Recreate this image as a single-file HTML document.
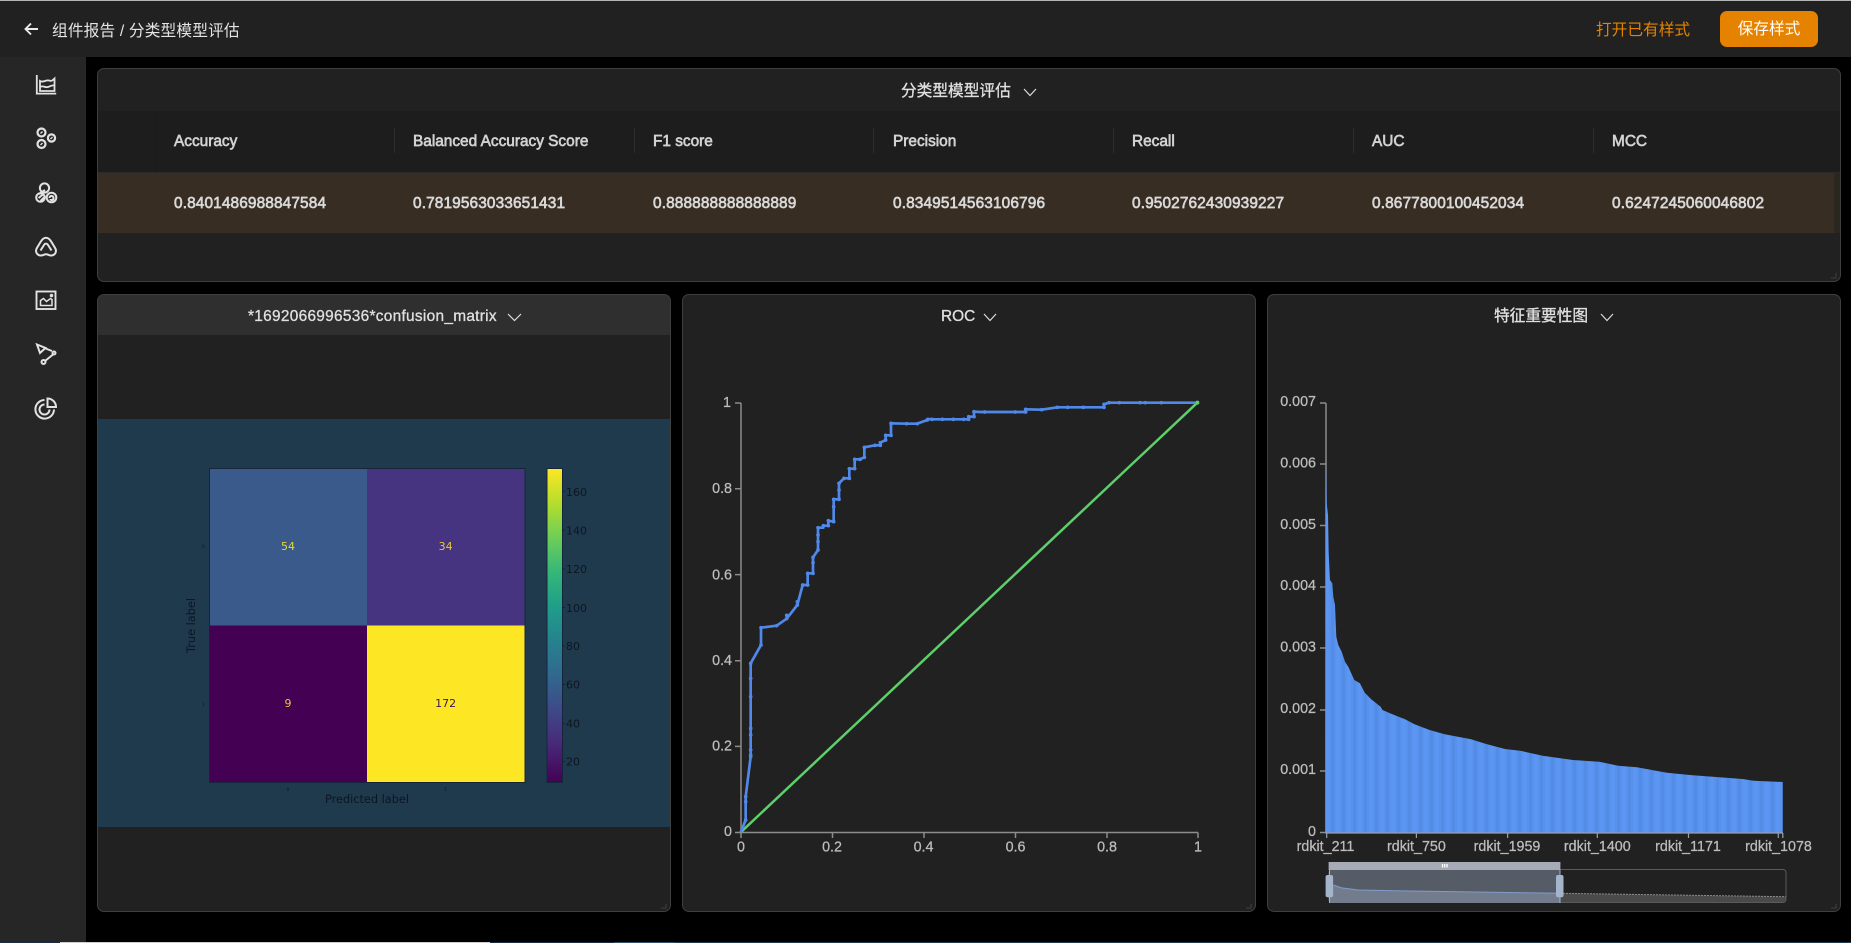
<!DOCTYPE html>
<html lang="zh">
<head>
<meta charset="utf-8">
<title>分类型模型评估</title>
<style>
html,body{margin:0;padding:0;background:#000;}
body{width:1851px;height:943px;overflow:hidden;position:relative;font-family:"Liberation Sans","Noto Sans CJK SC",sans-serif;color:#d9d9d9;font-size:15.4px;}
.abs{position:absolute;}
.cjk{font-size:15.7px;}
#top{left:0;top:0;width:1851px;height:57px;background:#212121;}
#topline{left:0;top:0;width:1851px;height:1px;background:#b4b4b4;}
#crumb{left:52px;top:21px;line-height:22px;color:#e4e4e4;white-space:nowrap;letter-spacing:.15px;}
#open{left:1596px;top:20px;line-height:22px;color:#e58200;white-space:nowrap;}
#save{left:1720px;top:11px;width:98px;height:36px;background:#e58200;border-radius:7px;color:#fff;text-align:center;line-height:38px;}
#side{left:0;top:57px;width:86px;height:886px;background:#262626;}
.panel{position:absolute;background:#212121;border:1px solid #3f3f3f;border-radius:7px;box-sizing:border-box;}
.ptitle{position:absolute;line-height:22px;white-space:nowrap;color:#e0e0e0;-webkit-text-stroke:.3px #e0e0e0;}
.th,.td{position:absolute;white-space:nowrap;line-height:20px;}
.th{top:132px;color:#d2d2d2;-webkit-text-stroke:.65px #d2d2d2;}
.td{top:194px;color:#d9d9d9;-webkit-text-stroke:.65px #d9d9d9;letter-spacing:.13px;}
.div{position:absolute;top:128px;width:1px;height:25px;background:#2d2d2d;}
#bottom{left:0;top:942px;width:1851px;height:1px;background:#1f3a4c;}
svg{position:absolute;left:0;top:0;}
.lab text{stroke:#bdbdbd;stroke-width:.25px;}
</style>
</head>
<body>
<div class="abs" id="top"></div>
<div class="abs" id="topline"></div>
<div class="abs cjk" id="crumb">组件报告 / 分类型模型评估</div>
<div class="abs cjk" id="open">打开已有样式</div>
<div class="abs cjk" id="save">保存样式</div>
<div class="abs" id="side"></div>

<div class="panel" style="left:97px;top:68px;width:1744px;height:214px;"></div>
<div class="abs" style="left:98px;top:111px;width:1742px;height:61px;background:#1d1d1d;"></div>
<div class="abs" style="left:155px;top:111px;width:1px;height:61px;background:#1a1a1a;"></div>
<div class="abs" style="left:98px;top:172px;width:1742px;height:1px;background:#2b2b2b;"></div>
<div class="abs" style="left:98px;top:173px;width:1742px;height:60px;background:#382d23;"></div>
<div class="abs" style="left:1834px;top:173px;width:6px;height:60px;background:#2a2620;"></div>
<div class="div" style="left:394px"></div>
<div class="div" style="left:634px"></div>
<div class="div" style="left:873px"></div>
<div class="div" style="left:1113px"></div>
<div class="div" style="left:1353px"></div>
<div class="div" style="left:1593px"></div>
<div class="th" style="left:174px">Accuracy</div>
<div class="th" style="left:413px">Balanced Accuracy Score</div>
<div class="th" style="left:653px">F1 score</div>
<div class="th" style="left:893px">Precision</div>
<div class="th" style="left:1132px">Recall</div>
<div class="th" style="left:1372px">AUC</div>
<div class="th" style="left:1612px">MCC</div>
<div class="td" style="left:174px">0.8401486988847584</div>
<div class="td" style="left:413px">0.7819563033651431</div>
<div class="td" style="left:653px">0.888888888888889</div>
<div class="td" style="left:893px">0.8349514563106796</div>
<div class="td" style="left:1132px">0.9502762430939227</div>
<div class="td" style="left:1372px">0.8677800100452034</div>
<div class="td" style="left:1612px">0.6247245060046802</div>
<div class="ptitle cjk" style="left:901px;top:81px;">分类型模型评估</div>

<div class="panel" style="left:97px;top:294px;width:574px;height:618px;"></div>
<div class="abs" style="left:98px;top:295px;width:572px;height:40px;background:#2f2f2f;border-radius:6px 6px 0 0;"></div>
<div class="abs" style="left:98px;top:419px;width:572px;height:408px;background:#203a4d;"></div>
<div class="ptitle" style="left:248px;top:306px;letter-spacing:.3px;">*1692066996536*confusion_matrix</div>

<div class="panel" style="left:682px;top:294px;width:574px;height:618px;"></div>
<div class="ptitle" style="left:941px;top:306px;">ROC</div>
<div class="panel" style="left:1267px;top:294px;width:574px;height:618px;"></div>
<div class="ptitle cjk" style="left:1494px;top:306px;">特征重要性图</div>

<div class="abs" id="bottom"></div>
<div class="abs" style="left:0;top:942px;width:60px;height:1px;background:#1c2b3f;"></div>
<div class="abs" style="left:60px;top:942px;width:430px;height:1px;background:#cfcfcf;"></div>
<div class="abs" style="left:490px;top:942px;width:124px;height:1px;background:#1c2b3f;"></div>
<div class="abs" style="left:614px;top:942px;width:61px;height:1px;background:#2f4f6a;"></div>

<svg width="1851" height="943" viewBox="0 0 1851 943" xmlns="http://www.w3.org/2000/svg">
<defs>
<linearGradient id="vir" x1="0" y1="0" x2="0" y2="1">
<stop offset="0" stop-color="#fde725"/><stop offset=".11" stop-color="#b5de2b"/><stop offset=".22" stop-color="#6ece58"/><stop offset=".33" stop-color="#35b779"/><stop offset=".44" stop-color="#1f9e89"/><stop offset=".55" stop-color="#26828e"/><stop offset=".66" stop-color="#31688e"/><stop offset=".77" stop-color="#3e4989"/><stop offset=".88" stop-color="#482878"/><stop offset="1" stop-color="#440154"/>
</linearGradient>
<pattern id="stripes" width="11" height="10" patternUnits="userSpaceOnUse" x="1325">
<rect width="11" height="10" fill="#5892ee"/><rect x="0" width="4" height="10" fill="#5b96f2"/><rect x="6" width="3" height="10" fill="#528ce4"/>
</pattern>
</defs>

<!-- back arrow -->
<path d="M38 29H26M31 23.500L25.500 29L31 34.500" fill="none" stroke="#eaeaea" stroke-width="1.900"/>

<!-- side icons -->
<g fill="none" stroke="#e2e2e2" stroke-width="1.600">
<g transform="translate(34,73)" stroke-width="1.800"><path d="M2.800 2v18.600h19.400"/><path d="M6 8c3 2 6-1.500 9-.5s3.500-.2 5.500-2V18H6z"/><path d="M6 14c3-2 5 1 8 0s4-2 6.500-1.500"/></g>
<g transform="translate(34,126)" stroke-width="2.200"><circle cx="7.500" cy="6.500" r="4"/><circle cx="17.500" cy="12" r="3.600"/><circle cx="7.500" cy="18" r="4"/><path d="M6.500 7.500l2-2M16.500 13l2-2M6.500 19l2-2" stroke-width="1.300"/></g>
<g transform="translate(34,181)" stroke-width="2"><circle cx="10.500" cy="7" r="4.600"/><circle cx="6.500" cy="16.500" r="4.300"/><circle cx="17.500" cy="16.500" r="4.800"/><path d="M15.500 17c0-2.800 4-2.800 4 0s-3 2.500-3 1"/><path d="M5 13l6-4M4.500 17l5-4M6.500 20l5-5"/></g>
<g transform="translate(34,235)" stroke-width="2"><path d="M12 2.800c2.800 0 4.400 2.300 5.800 4.700l3.500 5.800c1.800 3.700-.5 7.200-4.200 7.200-2.200 0-3.300-1.300-5.100-1.300s-2.900 1.300-5.100 1.300c-3.700 0-6-3.500-4.200-7.200l3.500-5.800C7.600 5.100 9.200 2.800 12 2.800z"/><path d="M6.500 15.500L10.300 9.500c.8-1.200 2.600-1.200 3.400 0L17.500 15.500"/></g>
<g transform="translate(34,288)" stroke-width="1.900"><rect x="2.500" y="3.500" width="19" height="17.500"/><path d="M6.500 17.500v-5l3-2 3 3 4-3 1.500 1v6z" stroke-width="1.500"/><circle cx="17.500" cy="7.500" r=".8"/></g>
<g transform="translate(34,341)" stroke-width="2"><path d="M3 3.500L11.500 7 6 12z"/><path d="M11.500 7.500L18 10"/><circle cx="20" cy="12" r="1.500"/><path d="M19 13.500L11 20"/><circle cx="9.500" cy="21" r="2"/></g>
<g transform="translate(34,396)" stroke-width="2"><path d="M10.500 4a9.300 9.300 0 1 0 9.500 9.500"/><path d="M10.500 8.500a5 5 0 1 0 5 5"/><path d="M13.500 2.500v8.500h8.500a8.500 8.500 0 0 0-8.500-8.500z"/></g>
</g>

<!-- chevrons -->
<g fill="none" stroke="#dcdcdc" stroke-width="1.200">
<path d="M1024 89l6 6.500 6-6.500"/>
<path d="M508 314l6.500 6.500 6.500-6.500"/>
<path d="M984 314l6 6.500 6-6.500"/>
<path d="M1601 314l6 6.500 6-6.500"/>
</g>

<!-- resize handles -->
<g fill="none" stroke="#3a3a3a" stroke-width="1.200">
<path d="M1836 273v5h-5"/><path d="M666 904v4h-5"/><path d="M1251 904v4h-5"/><path d="M1836 904v4h-5"/>
</g>

<!-- confusion matrix -->
<g>
<rect x="209.500" y="468.500" width="157.500" height="157" fill="#3a5a8c"/>
<rect x="367" y="468.500" width="158" height="157" fill="#463480"/>
<rect x="209.500" y="625.500" width="157.500" height="157" fill="#440154"/>
<rect x="367" y="625.500" width="158" height="157" fill="#fde725"/>
<rect x="209.500" y="468.500" width="315.500" height="314" fill="none" stroke="#16263a" stroke-width="1"/>
<rect x="547" y="468.500" width="15.500" height="314" fill="url(#vir)" stroke="#16263a" stroke-width="1"/>
<g font-family="'DejaVu Sans',sans-serif" font-size="11" text-anchor="middle">
<text x="288" y="550" fill="#e6d83a">54</text>
<text x="445.600" y="550" fill="#e6c83a">34</text>
<text x="288" y="707" fill="#e6c83a">9</text>
<text x="445.600" y="707" fill="#3a1a50">172</text>
</g>
<g font-family="'DejaVu Sans',sans-serif" font-size="11" fill="#0c1622">
<text x="566" y="496">160</text><text x="566" y="534.500">140</text><text x="566" y="573">120</text><text x="566" y="612">100</text><text x="566" y="650">80</text><text x="566" y="688.500">60</text><text x="566" y="727.500">40</text><text x="566" y="765.500">20</text>
<text x="367" y="803" text-anchor="middle" font-size="11.300">Predicted label</text>
<text transform="translate(195,625.500) rotate(-90)" text-anchor="middle" font-size="11.300">True label</text>
<g font-size="4.500"><text x="202" y="548">0</text><text x="202" y="706">1</text><text x="286.500" y="791">0</text><text x="444" y="791">1</text></g>
</g>
<path d="M562.500 491.500h2M562.500 530h2M562.500 569h2M562.500 607.500h2M562.500 646h2M562.500 684.500h2M562.500 723.500h2M562.500 761.500h2" stroke="#0c1622" stroke-width=".7"/>
</g>

<!-- ROC axes -->
<g stroke="#8c8c8c" stroke-width="1.500" fill="none">
<path d="M741 403V832.500H1198"/>
<path d="M735 403h6M735 488.800h6M735 574.600h6M735 660.800h6M735 746.400h6M735 832.500h6"/>
<path d="M741 832.500v5.500M832.500 832.500v5.500M924 832.500v5.500M1015.500 832.500v5.500M1107 832.500v5.500M1198 832.500v5.500"/>
</g>
<g class="lab" font-size="14.300" fill="#bdbdbd">
<g text-anchor="end"><text x="731" y="407">1</text><text x="732" y="493">0.8</text><text x="732" y="579.500">0.6</text><text x="732" y="665">0.4</text><text x="732" y="750.500">0.2</text><text x="732" y="836">0</text></g>
<g text-anchor="middle"><text x="741" y="851.500">0</text><text x="832" y="851.500">0.2</text><text x="923.500" y="851.500">0.4</text><text x="1015.500" y="851.500">0.6</text><text x="1107" y="851.500">0.8</text><text x="1198" y="851.500">1</text></g>
</g>

<!-- ROC lines -->
<g transform="translate(680,380) scale(.33333)" fill="none">
<path d="M182 1357L1552 68" stroke="#5dcf6b" stroke-width="7.500"/>
<path d="M1552 68h.1" stroke="#5dcf6b" stroke-width="12" stroke-linecap="round"/>
<path d="M182 1357L197 1320L197 1250L212 1130L212 850L243 795L243 743L290 737L320 716L352 675L368 615L383 615L383 580L399 580L399 532L414 510L414 443L430 443L430 437L445 437L445 422L461 425L461 358L477 358L477 310L492 295L508 295L508 266L524 266L524 238L540 238L553 232L553 202L585 196L601 196L601 188L617 180L617 166L633 166L633 130L680 131L712 131L742 120L742 117L756 118L787 118L820 118L866 118L866 110L882 110L882 95L900 96L914 96L1006 96L1037 96L1037 88L1085 89L1132 82L1163 82L1210 82L1272 82L1272 73L1287 68L1318 68L1380 68L1396 68L1444 68L1546 68" stroke="#5089ea" stroke-width="8" stroke-linejoin="round"/>
<path d="M197 1320h.1M197 1265h.1M197 1250h.1M212 1130h.1M212 1125h.1M212 1110h.1M212 1065h.1M212 1045h.1M212 950h.1M212 895h.1M212 850h.1M243 795h.1M243 743h.1M290 737h.1M320 716h.1M320 706h.1M352 675h.1M352 665h.1M368 615h.1M383 615h.1M383 580h.1M399 580h.1M399 532h.1M399 548h.1M414 510h.1M414 485h.1M414 465h.1M414 443h.1M430 437h.1M445 437h.1M445 422h.1M461 425h.1M461 380h.1M461 358h.1M477 358h.1M477 330h.1M477 310h.1M492 295h.1M508 295h.1M508 266h.1M524 266h.1M524 238h.1M540 238h.1M553 232h.1M553 202h.1M585 196h.1M601 196h.1M601 188h.1M617 180h.1M617 166h.1M633 166h.1M633 130h.1M680 131h.1M712 131h.1M742 120h.1M756 118h.1M787 118h.1M820 118h.1M851 118h.1M866 118h.1M866 110h.1M882 110h.1M882 95h.1M914 96h.1M1006 96h.1M1037 96h.1M1037 88h.1M1085 89h.1M1132 82h.1M1163 82h.1M1210 82h.1M1272 82h.1M1272 73h.1M1287 68h.1M1318 68h.1M1380 68h.1M1396 68h.1M1444 68h.1" stroke="#5089ea" stroke-width="11" stroke-linecap="round"/>
</g>

<!-- feature importance -->
<g stroke="#8c8c8c" stroke-width="1.500" fill="none">
<path d="M1326 403V832.500"/>
<path d="M1320 403h6M1320 464h6M1320 525.500h6M1320 587h6M1320 648h6M1320 710h6M1320 771h6M1320 832.500h6"/>
</g>
<path d="M1325.300 832.500L1325.700 443.300L1326.700 503.300L1328 515L1328.700 553.300L1330 580L1332.300 583.300L1333.300 596.700L1335 605L1336.300 636.700L1338.300 645L1341.700 651.700L1345 661.700L1348.300 666.700L1354.300 680L1359.900 683.300L1364.800 692.700L1371.200 699.300L1380.600 706.700L1382.500 710L1390 713.300L1405.100 719.300L1414.500 724.300L1429.600 730L1444.700 734.300L1471.100 739.300L1486.200 744L1505 749L1520.100 750.700L1542.700 755.700L1572.900 760L1599.200 761.700L1618.100 765.700L1636.900 767.300L1667.100 772.700L1689.700 775L1742.500 779L1753.800 780.700L1782.800 782V832.500z" fill="url(#stripes)"/>
<g stroke="#9aa0aa" stroke-width="1.200" fill="none">
<path d="M1325.300 833H1783"/>
<path d="M1326.700 833v5M1416.400 833v5M1507.600 833v5M1597.300 833v5M1688.500 833v5M1778.300 833v5M1782.800 833v5"/>
</g>
<g class="lab" font-size="14.300" fill="#bdbdbd">
<g text-anchor="end"><text x="1316" y="406">0.007</text><text x="1316" y="467.500">0.006</text><text x="1316" y="529">0.005</text><text x="1316" y="590">0.004</text><text x="1316" y="651.500">0.003</text><text x="1316" y="713">0.002</text><text x="1316" y="774">0.001</text><text x="1316" y="836">0</text></g>
<g text-anchor="middle"><text x="1325.500" y="851">rdkit_211</text><text x="1416.400" y="851">rdkit_750</text><text x="1507" y="851">rdkit_1959</text><text x="1597.300" y="851">rdkit_1400</text><text x="1688" y="851">rdkit_1171</text><text x="1778.500" y="851">rdkit_1078</text></g>
</g>

<!-- data zoom -->
<rect x="1329" y="869.500" width="457" height="33" rx="3" fill="none" stroke="#5a5a5a" stroke-width="1"/>
<path d="M1560 893.300L1785.800 896.700V902H1560z" fill="#4a4a4a"/>
<path d="M1560 893.300L1785.800 896.700" stroke="#8a8a8a" stroke-width="1" stroke-dasharray="2 1" fill="none"/>
<rect x="1329" y="870" width="231.500" height="33" fill="#565c66"/>
<path d="M1333.500 885L1341 887.700L1358 890L1410.800 891L1560.500 893.300V903H1329V885z" fill="#727c8c"/>
<path d="M1333.500 885L1341 887.700L1358 890L1410.800 891L1560.500 893.300" stroke="#7f9ccc" stroke-width="1" fill="none"/>
<rect x="1328.600" y="862" width="231.800" height="8" fill="#a7abb8"/>
<path d="M1442.500 864v3.500M1444.700 864v3.500M1447 864v3.500" stroke="#fff" stroke-width="1.300"/>
<path d="M1329.500 870v33M1560 870v33" stroke="#a3b4cb" stroke-width="1"/>
<rect x="1325.600" y="875" width="7.500" height="22.300" rx="2" fill="#a3b4cb"/>
<rect x="1556" y="875" width="7.500" height="22.300" rx="2" fill="#a3b4cb"/>
</svg>
</body>
</html>
